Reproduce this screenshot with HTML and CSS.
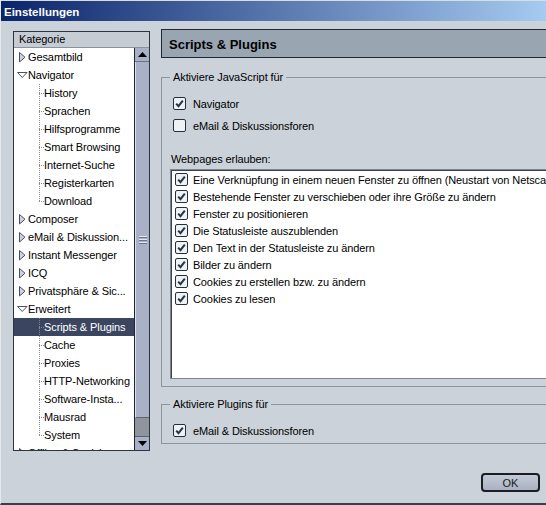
FILE: index.html
```html
<!DOCTYPE html>
<html lang="de">
<head>
<meta charset="utf-8">
<title>Einstellungen</title>
<link rel="stylesheet" href="styles.css">
</head>
<body>
<div class="window">
  <div class="titlebar">Einstellungen</div>
  <div class="main">
    <div class="tree">
      <div class="tree-head">Kategorie</div>
      <div class="tree-body">
        <ul class="tree-list">
          <li class="top"><svg class="tw" width="11" height="18" viewBox="0 0 11 18"><polygon points="2.5,4.5 8,9.2 2.5,14" fill="#cdd3de" stroke="#4a5262"/></svg>Gesamtbild</li>
          <li class="top"><svg class="tw" width="11" height="18" viewBox="0 0 11 18"><polygon points="0.5,6.5 10,6.5 5.25,11.5" fill="#ffffff" stroke="#4a5262"/></svg>Navigator</li>
          <li class="child">History</li>
          <li class="child">Sprachen</li>
          <li class="child">Hilfsprogramme</li>
          <li class="child">Smart Browsing</li>
          <li class="child">Internet-Suche</li>
          <li class="child">Registerkarten</li>
          <li class="child last">Download</li>
          <li class="top"><svg class="tw" width="11" height="18" viewBox="0 0 11 18"><polygon points="2.5,4.5 8,9.2 2.5,14" fill="#cdd3de" stroke="#4a5262"/></svg>Composer</li>
          <li class="top"><svg class="tw" width="11" height="18" viewBox="0 0 11 18"><polygon points="2.5,4.5 8,9.2 2.5,14" fill="#cdd3de" stroke="#4a5262"/></svg>eMail &amp; Diskussion...</li>
          <li class="top"><svg class="tw" width="11" height="18" viewBox="0 0 11 18"><polygon points="2.5,4.5 8,9.2 2.5,14" fill="#cdd3de" stroke="#4a5262"/></svg>Instant Messenger</li>
          <li class="top"><svg class="tw" width="11" height="18" viewBox="0 0 11 18"><polygon points="2.5,4.5 8,9.2 2.5,14" fill="#cdd3de" stroke="#4a5262"/></svg>ICQ</li>
          <li class="top"><svg class="tw" width="11" height="18" viewBox="0 0 11 18"><polygon points="2.5,4.5 8,9.2 2.5,14" fill="#cdd3de" stroke="#4a5262"/></svg>Privatsphäre &amp; Sic...</li>
          <li class="top"><svg class="tw" width="11" height="18" viewBox="0 0 11 18"><polygon points="0.5,6.5 10,6.5 5.25,11.5" fill="#ffffff" stroke="#4a5262"/></svg>Erweitert</li>
          <li class="child selected">Scripts &amp; Plugins</li>
          <li class="child">Cache</li>
          <li class="child">Proxies</li>
          <li class="child">HTTP-Networking</li>
          <li class="child">Software-Insta...</li>
          <li class="child">Mausrad</li>
          <li class="child last">System</li>
          <li class="top"><svg class="tw" width="11" height="18" viewBox="0 0 11 18"><polygon points="2.5,4.5 8,9.2 2.5,14" fill="#cdd3de" stroke="#4a5262"/></svg>Offline &amp; Speicher...</li>
        </ul>
        <div class="scrollbar">
          <div class="sb-btn sb-up"><svg width="9" height="5" viewBox="0 0 9 5"><polygon points="0,5 9,5 4.5,0" fill="#000"/></svg></div>
          <div class="sb-thumb"><span class="grip"></span></div>
          <div class="sb-track"></div>
          <div class="sb-btn sb-down"><svg width="9" height="5" viewBox="0 0 9 5"><polygon points="0,0 9,0 4.5,5" fill="#000"/></svg></div>
        </div>
      </div>
    </div>

    <div class="panel">
      <div class="panel-head">Scripts &amp; Plugins</div>

      <fieldset class="group group-js">
        <legend>Aktiviere JavaScript für</legend>
        <div class="check-row"><span class="box"><svg width="11" height="11" viewBox="0 0 11 11"><path d="M2.2 5.6 L4.5 8.2 L8.8 2.6" fill="none" stroke="#2b3442" stroke-width="2"/></svg></span>Navigator</div>
        <div class="check-row"><span class="box"></span>eMail &amp; Diskussionsforen</div>
        <div class="label-web">Webpages erlauben:</div>
        <div class="list">
          <div class="check-row"><span class="box"><svg width="11" height="11" viewBox="0 0 11 11"><path d="M2.2 5.6 L4.5 8.2 L8.8 2.6" fill="none" stroke="#2b3442" stroke-width="2"/></svg></span>Eine Verknüpfung in einem neuen Fenster zu öffnen (Neustart von Netscape erforderlich)</div>
          <div class="check-row"><span class="box"><svg width="11" height="11" viewBox="0 0 11 11"><path d="M2.2 5.6 L4.5 8.2 L8.8 2.6" fill="none" stroke="#2b3442" stroke-width="2"/></svg></span>Bestehende Fenster zu verschieben oder ihre Größe zu ändern</div>
          <div class="check-row"><span class="box"><svg width="11" height="11" viewBox="0 0 11 11"><path d="M2.2 5.6 L4.5 8.2 L8.8 2.6" fill="none" stroke="#2b3442" stroke-width="2"/></svg></span>Fenster zu positionieren</div>
          <div class="check-row"><span class="box"><svg width="11" height="11" viewBox="0 0 11 11"><path d="M2.2 5.6 L4.5 8.2 L8.8 2.6" fill="none" stroke="#2b3442" stroke-width="2"/></svg></span>Die Statusleiste auszublenden</div>
          <div class="check-row"><span class="box"><svg width="11" height="11" viewBox="0 0 11 11"><path d="M2.2 5.6 L4.5 8.2 L8.8 2.6" fill="none" stroke="#2b3442" stroke-width="2"/></svg></span>Den Text in der Statusleiste zu ändern</div>
          <div class="check-row"><span class="box"><svg width="11" height="11" viewBox="0 0 11 11"><path d="M2.2 5.6 L4.5 8.2 L8.8 2.6" fill="none" stroke="#2b3442" stroke-width="2"/></svg></span>Bilder zu ändern</div>
          <div class="check-row"><span class="box"><svg width="11" height="11" viewBox="0 0 11 11"><path d="M2.2 5.6 L4.5 8.2 L8.8 2.6" fill="none" stroke="#2b3442" stroke-width="2"/></svg></span>Cookies zu erstellen bzw. zu ändern</div>
          <div class="check-row"><span class="box"><svg width="11" height="11" viewBox="0 0 11 11"><path d="M2.2 5.6 L4.5 8.2 L8.8 2.6" fill="none" stroke="#2b3442" stroke-width="2"/></svg></span>Cookies zu lesen</div>
        </div>
      </fieldset>

      <fieldset class="group group-plugins">
        <legend>Aktiviere Plugins für</legend>
        <div class="check-row"><span class="box"><svg width="11" height="11" viewBox="0 0 11 11"><path d="M2.2 5.6 L4.5 8.2 L8.8 2.6" fill="none" stroke="#2b3442" stroke-width="2"/></svg></span>eMail &amp; Diskussionsforen</div>
      </fieldset>
    </div>
  </div>
  <div class="footer">
    <button class="ok" type="button">OK</button>
  </div>
</div>
</body>
</html>
```

FILE: styles.css
```css
* { box-sizing: border-box; }

html, body {
  margin: 0;
  padding: 0;
}

body {
  width: 546px;
  height: 505px;
  overflow: hidden;
  font-family: "Liberation Sans", Arial, sans-serif;
  font-size: 11px;
  letter-spacing: -0.1px;
  color: #000;
  background: #cbd2d9;
}

.window {
  width: 546px;
  height: 505px;
  overflow: hidden;
  background: #cbd2d9;
  border-left: 1px solid #e6e9ed;
  border-bottom: 2px solid #3a3f45;
  display: flex;
  flex-direction: column;
}

.titlebar {
  flex: none;
  height: 21px;
  padding: 2px 0 0 3px;
  line-height: 19px;
  font-size: 11.5px;
  font-weight: bold;
  letter-spacing: 0;
  color: #fff;
  background: linear-gradient(to right, #0a246a, #a6caf0);
  border-top: 1px solid #d8dde4;
}

.main {
  flex: none;
  height: 430px;
  display: flex;
  align-items: flex-start;
  gap: 11px;
  padding: 8px 0 0 12px;
}

/* ---------- tree ---------- */
.tree {
  flex: none;
  width: 137px;
  height: 420px;
  margin-top: 2px;
  border: 1px solid #2e3642;
  background: #fff;
  display: flex;
  flex-direction: column;
  overflow: hidden;
}

.tree-head {
  flex: none;
  height: 16px;
  line-height: 15px;
  padding-left: 5px;
  background: #c5ccd4;
  border-bottom: 1px solid #8a929c;
}

.tree-body {
  flex: 1;
  min-height: 0;
  display: flex;
}

.tree-list {
  flex: none;
  width: 120px;
  margin: 0;
  padding: 0;
  list-style: none;
  overflow: hidden;
}

.tree-list li {
  height: 18px;
  line-height: 18px;
  white-space: nowrap;
  display: flex;
  align-items: center;
}

.top {
  padding-left: 3px;
}

.tw {
  flex: none;
  display: block;
}

.child {
  padding-left: 30px;
  background-image:
    repeating-linear-gradient(to bottom, #8a8a8a 0 1px, transparent 1px 2px),
    repeating-linear-gradient(to right, #8a8a8a 0 1px, transparent 1px 2px);
  background-size: 1px 18px, 5px 1px;
  background-position: 25px 0, 25px 9px;
  background-repeat: no-repeat;
}

.child.last {
  background-size: 1px 10px, 5px 1px;
}

.child.selected {
  background-color: #3b4560;
  color: #fff;
}

/* ---------- scrollbar ---------- */
.scrollbar {
  flex: none;
  width: 15px;
  display: flex;
  flex-direction: column;
  border-left: 1px solid #1e2630;
  background: #8f959d;
}

.sb-btn {
  flex: none;
  height: 14px;
  background: #a9b1c6;
  display: flex;
  align-items: center;
  justify-content: center;
}

.sb-up {
  border-bottom: 1px solid #6c7488;
}

.sb-down {
  border-top: 1px solid #5a6070;
}

.sb-thumb {
  flex: none;
  height: 356px;
  background: #a9b1c6;
  border-left: 1px solid #dde1ea;
  border-bottom: 1px solid #5c6470;
  display: flex;
  align-items: center;
  justify-content: center;
}

.grip {
  display: block;
  width: 8px;
  height: 8px;
  background: repeating-linear-gradient(to bottom, #e2e6ee 0 1px, #6e7688 1px 2px, transparent 2px 3px);
}

.sb-track {
  flex: 1;
}

/* ---------- right panel ---------- */
.panel {
  flex: none;
  width: 420px;
}

.panel-head {
  height: 29px;
  padding: 2px 0 0 7px;
  line-height: 25px;
  font-size: 13px;
  font-weight: bold;
  letter-spacing: 0;
  background: #9aa5b2;
  border: 1px solid #1f2833;
}

.group {
  margin: 13px 0 0 0;
  padding: 8px 0 7px 11px;
  border: 1px solid #8d959e;
  min-width: 0;
}

.group legend {
  margin-left: -3px;
  padding: 0 3px;
  line-height: 13px;
}

.group-plugins {
  margin-top: 11px;
  padding: 8px 0 1px 11px;
}

.check-row {
  height: 23px;
  display: flex;
  align-items: center;
  white-space: nowrap;
}

.group-js > .check-row + .check-row {
  height: 21px;
}

.box {
  flex: none;
  width: 13px;
  height: 13px;
  margin-right: 7px;
  border: 1px solid #26303c;
  border-radius: 2px;
  background: #eef1f5;
  display: flex;
}

.box svg {
  display: block;
}

.label-web {
  margin: 17px 0 0 -2px;
  line-height: 13px;
}

.list {
  margin: 3px 0 0 -3px;
  height: 210px;
  padding: 1px 0 0 4px;
  background: #fff;
  border: 1px solid #7d858f;
  box-shadow: inset 1px 1px 0 #3a424c;
  overflow: hidden;
}

.list .check-row {
  height: 17px;
}

.list .box {
  margin-right: 5px;
}

/* ---------- footer ---------- */
.footer {
  flex: none;
  display: flex;
  justify-content: flex-end;
  padding: 22px 6px 0 0;
}

.ok {
  width: 59px;
  height: 19px;
  padding: 0;
  font-family: "Liberation Sans", Arial, sans-serif;
  font-size: 11px;
  color: #1a1a1a;
  background: linear-gradient(to bottom, #c3cad6, #aab2c2);
  border: 2px solid #1a1e24;
  border-radius: 4px;
}
```
